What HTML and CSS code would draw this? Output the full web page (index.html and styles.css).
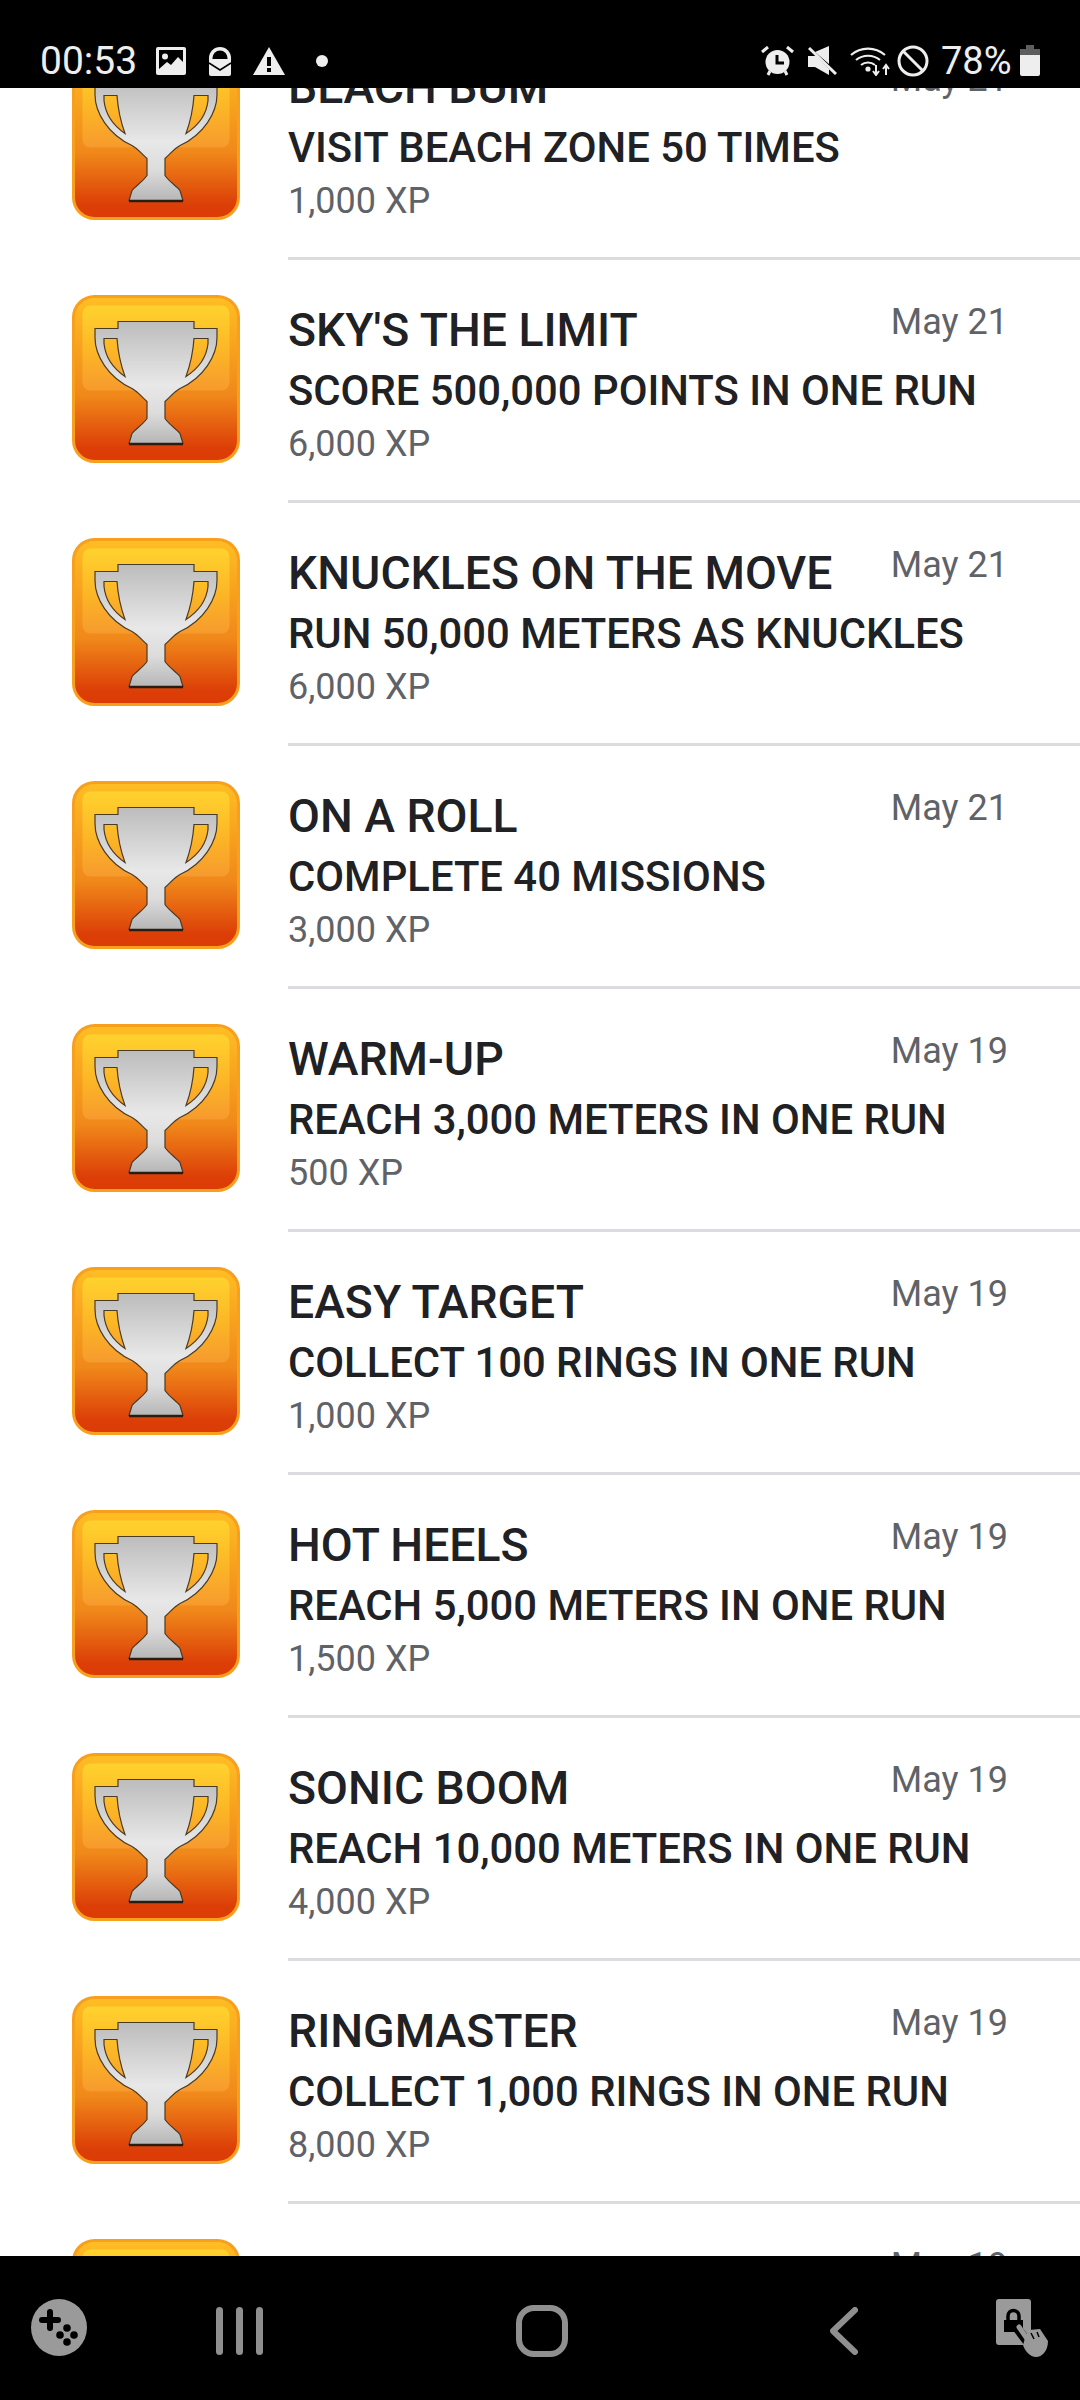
FILE: index.html
```html
<!DOCTYPE html>
<html lang="en">
<head>
<meta charset="utf-8">
<title>Achievements</title>
<link rel="stylesheet" href="styles.css">
</head>
<body>
<svg class="defs" width="0" height="0" aria-hidden="true">
  <defs>
    <linearGradient id="bg" x1="0" y1="0" x2="0" y2="1">
      <stop offset="0" stop-color="#ffbe24"/><stop offset="0.6" stop-color="#f0881a"/><stop offset="0.92" stop-color="#dc3e07"/><stop offset="1" stop-color="#dc3c06"/>
    </linearGradient>
    <linearGradient id="gloss" x1="0" y1="0" x2="0" y2="1">
      <stop offset="0" stop-color="#ffd22e"/><stop offset="0.55" stop-color="#fcb526"/><stop offset="1" stop-color="#f69a2e"/>
    </linearGradient>
    <linearGradient id="silver" gradientUnits="userSpaceOnUse" x1="0" y1="28" x2="0" y2="150">
      <stop offset="0" stop-color="#bcbcbc"/><stop offset="0.52" stop-color="#e8e8e8"/><stop offset="0.75" stop-color="#dcdcdc"/><stop offset="1" stop-color="#b6b6b6"/>
    </linearGradient>
    <symbol id="trophy" viewBox="0 0 168 168">
      <rect x="1.500" y="1.500" width="165" height="165" rx="21" fill="url(#bg)" stroke="#f99f1e" stroke-width="3"/>
      <rect x="10.500" y="10.500" width="147" height="85" rx="8" fill="url(#gloss)"/>
      <g transform="translate(0 -1.500)">
        <path fill="url(#silver)" stroke="#4a3b25" stroke-width="1.200" fill-rule="evenodd" d="M46 28H122V35H145V44C145 62 132 84 108 95C101 99 98 104 93 108V125C97 131 104 135 108 140L111 150H57L60 140C64 135 71 131 75 125V108C70 104 67 99 60 95C36 84 23 62 23 44V35H46ZM32 45V50C33 60 37 72 53 83C49 72 46 60 45 45ZM136 45V50C135 60 131 72 114 83C118 72 121 60 122 45Z"/>
        <path d="M57 150.500H111" stroke="#2b1c12" stroke-width="2.400"/>
      </g>
    </symbol>
  </defs>
</svg>
<div class="phone">
  <header class="status">
    <div class="status-left">
      <span class="clock">00:53</span>
      <svg class="ic-image" viewBox="0 0 30 28"><rect width="30" height="28" rx="2" fill="#eee"/><rect x="3" y="3" width="24" height="22" fill="#000"/><circle cx="9" cy="9.500" r="3" fill="#eee"/><path d="M3 22L11 15L15 18L22 10L27 15V25H3Z" fill="#eee"/></svg>
      <svg class="ic-mail" viewBox="0 0 22 30"><path d="M0 12A11 11 0 0 1 22 12V28Q22 30 20 30H2Q0 30 0 28Z" fill="#eee"/><path d="M3.500 12A7.500 7.500 0 0 1 18.500 12V13H3.500Z" fill="#000"/><path d="M0 17L11 24L22 17" fill="none" stroke="#000" stroke-width="1.500"/></svg>
      <svg class="ic-warn" viewBox="0 0 32 28"><path d="M16 0L32 28H0Z" fill="#eee"/><rect x="14" y="10" width="4" height="9" fill="#000"/><rect x="14" y="21" width="4" height="4" fill="#000"/></svg>
      <span class="dot"></span>
    </div>
    <div class="status-right">
      <svg class="ic-alarm" viewBox="0 0 33 30"><path d="M1 6L7 1M32 6L26 1M7 29L9 25M26 29L24 25" stroke="#eee" stroke-width="3" fill="none"/><circle cx="16.500" cy="16" r="12" fill="#eee"/><path d="M16 9V17H23" stroke="#000" stroke-width="3" fill="none"/></svg>
      <svg class="ic-mute" viewBox="0 0 29 29"><path d="M21 0V18L7 6ZM0 10H8L21 23V29L7 21H0Z" fill="#eee"/><path d="M1 2L28 28" stroke="#eee" stroke-width="3"/></svg>
      <svg class="ic-wifi" viewBox="0 0 40 31"><path d="M1 10A26 26 0 0 1 35 10M6 15A19 19 0 0 1 30 15M11 20A11 11 0 0 1 25 20" fill="none" stroke="#eee" stroke-width="2.200"/><circle cx="18" cy="24" r="2.600" fill="#eee"/><path d="M26 20V29M23 26L26 30L29 26M36 30V21M33 24L36 20L39 24" fill="none" stroke="#eee" stroke-width="2"/></svg>
      <svg class="ic-block" viewBox="0 0 32 32"><circle cx="16" cy="16" r="14" fill="none" stroke="#eee" stroke-width="3"/><path d="M6 6L26 26" stroke="#eee" stroke-width="3"/></svg>
      <span class="battery-text">78%</span>
      <svg class="ic-battery" viewBox="0 0 20 31"><path d="M6 0H14V4H20V10H0V4H6Z" fill="#5e5e5e"/><path d="M0 10H20V29Q20 31 18 31H2Q0 31 0 29Z" fill="#eee"/></svg>
    </div>
  </header>

  <main class="viewport">
    <ul class="list">
      <li class="row"><svg class="badge"><use href="#trophy"/></svg><div class="body"><div class="head"><h2 class="title">BEACH BUM</h2><time class="date">May 21</time></div><p class="desc">VISIT BEACH ZONE 50 TIMES</p><p class="xp">1,000 XP</p></div></li>
      <li class="row"><svg class="badge"><use href="#trophy"/></svg><div class="body"><div class="head"><h2 class="title">SKY'S THE LIMIT</h2><time class="date">May 21</time></div><p class="desc">SCORE 500,000 POINTS IN ONE RUN</p><p class="xp">6,000 XP</p></div></li>
      <li class="row"><svg class="badge"><use href="#trophy"/></svg><div class="body"><div class="head"><h2 class="title">KNUCKLES ON THE MOVE</h2><time class="date">May 21</time></div><p class="desc">RUN 50,000 METERS AS KNUCKLES</p><p class="xp">6,000 XP</p></div></li>
      <li class="row"><svg class="badge"><use href="#trophy"/></svg><div class="body"><div class="head"><h2 class="title">ON A ROLL</h2><time class="date">May 21</time></div><p class="desc">COMPLETE 40 MISSIONS</p><p class="xp">3,000 XP</p></div></li>
      <li class="row"><svg class="badge"><use href="#trophy"/></svg><div class="body"><div class="head"><h2 class="title">WARM-UP</h2><time class="date">May 19</time></div><p class="desc">REACH 3,000 METERS IN ONE RUN</p><p class="xp">500 XP</p></div></li>
      <li class="row"><svg class="badge"><use href="#trophy"/></svg><div class="body"><div class="head"><h2 class="title">EASY TARGET</h2><time class="date">May 19</time></div><p class="desc">COLLECT 100 RINGS IN ONE RUN</p><p class="xp">1,000 XP</p></div></li>
      <li class="row"><svg class="badge"><use href="#trophy"/></svg><div class="body"><div class="head"><h2 class="title">HOT HEELS</h2><time class="date">May 19</time></div><p class="desc">REACH 5,000 METERS IN ONE RUN</p><p class="xp">1,500 XP</p></div></li>
      <li class="row"><svg class="badge"><use href="#trophy"/></svg><div class="body"><div class="head"><h2 class="title">SONIC BOOM</h2><time class="date">May 19</time></div><p class="desc">REACH 10,000 METERS IN ONE RUN</p><p class="xp">4,000 XP</p></div></li>
      <li class="row"><svg class="badge"><use href="#trophy"/></svg><div class="body"><div class="head"><h2 class="title">RINGMASTER</h2><time class="date">May 19</time></div><p class="desc">COLLECT 1,000 RINGS IN ONE RUN</p><p class="xp">8,000 XP</p></div></li>
      <li class="row"><svg class="badge"><use href="#trophy"/></svg><div class="body"><div class="head"><h2 class="title">SPEED DEMON</h2><time class="date">May 19</time></div></div></li>
    </ul>
  </main>

  <nav class="nav">
    <svg class="nv-game" viewBox="0 0 56 57"><ellipse cx="28" cy="28.500" rx="28" ry="28.500" fill="#9a9a9a"/><path d="M19 13V29M11 21H27" stroke="#000" stroke-width="6" stroke-linecap="round" fill="none"/><circle cx="36" cy="29" r="3.800" fill="#000"/><circle cx="29" cy="36" r="3.800" fill="#000"/><circle cx="43" cy="36" r="3.800" fill="#000"/><circle cx="36" cy="43" r="3.800" fill="#000"/></svg>
    <svg class="nv-recents" viewBox="0 0 47 48"><rect width="7" height="48" rx="3.500" fill="#8f8f8f"/><rect x="20" width="7" height="48" rx="3.500" fill="#8f8f8f"/><rect x="40" width="7" height="48" rx="3.500" fill="#8f8f8f"/></svg>
    <svg class="nv-home" viewBox="0 0 52 52"><rect x="3" y="3" width="46" height="46" rx="15" fill="none" stroke="#8f8f8f" stroke-width="6"/></svg>
    <svg class="nv-back" viewBox="0 0 28 48"><path d="M25 3L3 24L25 45" fill="none" stroke="#8f8f8f" stroke-width="6" stroke-linecap="round" stroke-linejoin="round"/></svg>
    <svg class="nv-lock" viewBox="0 0 52 58"><rect width="35" height="46" rx="3" fill="#9a9a9a"/><path d="M8 21H27V33H8Z" fill="#000"/><path d="M12 21V17A5.500 5.500 0 0 1 23 17V21" fill="none" stroke="#000" stroke-width="3.500"/><path d="M21 29L33 45" stroke="#000" stroke-width="9"/><path d="M23 28L34 44" stroke="#9a9a9a" stroke-width="5" stroke-linecap="round"/><path d="M30 36L33 31L44 30L52 42C52 52 46 58 40 58C34 58 29 52 27 46Z" fill="#9a9a9a"/><path d="M35 34L38 40M41 33L43 38" stroke="#000" stroke-width="1.500"/></svg>
  </nav>
</div>
</body>
</html>
```

FILE: styles.css
```css
* { box-sizing: border-box; }
html, body { margin: 0; padding: 0; background: #fff; }
.defs { position: absolute; }
.phone { width: 1080px; height: 2400px; display: flex; flex-direction: column; overflow: hidden; font-family: Roboto, "Liberation Sans", sans-serif; }

.status { flex: 0 0 88px; background: #000; color: #eee; display: flex; justify-content: space-between; align-items: flex-start; padding: 45px 40px 0 40px; position: relative; z-index: 1; }
.status-left, .status-right { display: flex; align-items: flex-start; height: 32px; }
.clock { font-size: 39px; line-height: 32px; width: 95px; margin-right: 21px; }
.status svg { display: block; flex: none; }
.ic-image { width: 30px; height: 28px; margin-top: 2px; margin-right: 23px; }
.ic-mail { width: 22px; height: 30px; margin-top: 1px; margin-right: 22px; }
.ic-warn { width: 32px; height: 28px; margin-top: 2px; margin-right: 31px; }
.dot { width: 12px; height: 12px; border-radius: 50%; background: #eee; margin-top: 10px; }
.ic-alarm { width: 33px; height: 30px; margin-top: 1px; margin-right: 14px; }
.ic-mute { width: 29px; height: 29px; margin-top: 1px; margin-right: 13px; }
.ic-wifi { width: 40px; height: 31px; margin-right: 7px; }
.ic-block { width: 32px; height: 32px; margin-right: 12px; }
.battery-text { font-size: 38px; line-height: 32px; width: 74px; margin-right: 5px; }
.ic-battery { width: 20px; height: 31px; }

.viewport { flex: 1 1 auto; min-height: 0; overflow: hidden; }
.list { list-style: none; margin: -71px 0 0; padding: 0; }
.row { height: 243px; display: flex; align-items: flex-start; padding-left: 72px; }
.badge { width: 168px; height: 168px; flex: none; margin-top: 35px; }
.body { flex: 1; margin-left: 48px; height: 243px; border-bottom: 3px solid #dadce0; padding: 38px 72px 0 0; }
.head { display: flex; justify-content: space-between; align-items: flex-start; }
.title { margin: 0; font-size: 46.300px; font-weight: 500; line-height: 64px; color: #202124; }
.date { font-size: 36px; line-height: 48px; color: #5f6368; }
.desc { margin: 0; font-size: 41.800px; font-weight: 500; line-height: 58px; color: #202124; }
.xp { margin: 0; font-size: 36px; line-height: 48px; color: #5f6368; }

.nav { flex: 0 0 144px; background: #000; display: flex; align-items: flex-start; padding-left: 31px; position: relative; z-index: 1; }
.nav svg { display: block; flex: none; }
.nv-game { width: 56px; height: 57px; margin-top: 43px; }
.nv-recents { width: 47px; height: 48px; margin-top: 51px; margin-left: 129px; }
.nv-home { width: 52px; height: 52px; margin-top: 49px; margin-left: 253px; }
.nv-back { width: 28px; height: 48px; margin-top: 51px; margin-left: 262px; }
.nv-lock { width: 52px; height: 58px; margin-top: 43px; margin-left: 138px; }
```
